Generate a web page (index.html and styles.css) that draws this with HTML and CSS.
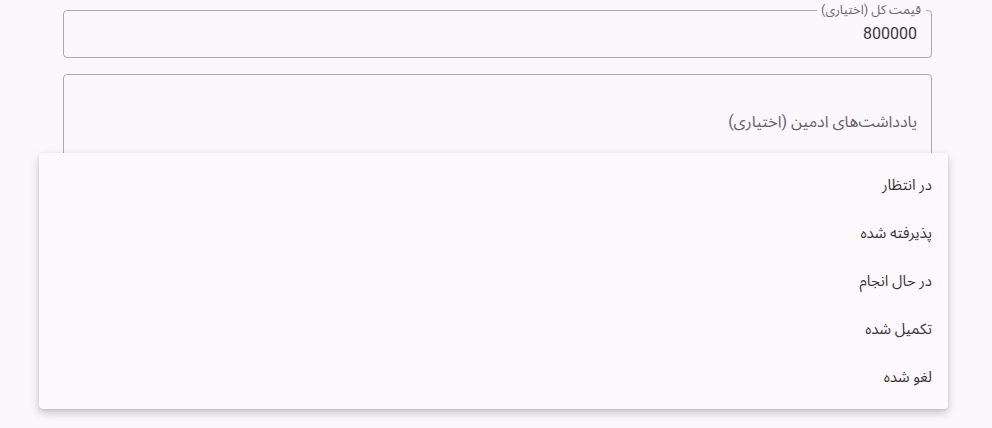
FILE: index.html
```html
<!DOCTYPE html>
<html lang="fa" dir="rtl">
<head>
    <meta charset="UTF-8">
    <meta name="viewport" content="width=device-width, initial-scale=1.0">
    <title>ویرایش سفارش</title>
    <link rel="stylesheet" href="styles.css">
</head>
<body>

    <div class="form">
        <div class="field">
            <span class="label">قیمت کل (اختیاری)</span>
            <div class="value">800000</div>
        </div>

        <div class="field notes">
            <div class="placeholder">یادداشت‌های ادمین (اختیاری)</div>
        </div>

        <div class="field status"></div>
    </div>

    <div class="menu">
        <div class="item">در انتظار</div>
        <div class="item">پذیرفته شده</div>
        <div class="item">در حال انجام</div>
        <div class="item">تکمیل شده</div>
        <div class="item">لغو شده</div>
    </div>

</body>
</html>
```

FILE: styles.css
```css
* {
    margin: 0;
    padding: 0;
    box-sizing: border-box;
}
body {
    font-family: Roboto, "Noto Sans Arabic", "DejaVu Sans", sans-serif;
    background-color: #fcf7fc;
    color: #1d1b20;
    height: 428px;
    overflow: hidden;
    position: relative;
}
.form {
    display: flex;
    flex-direction: column;
    gap: 16px;
    padding: 10px 60px 0 63px;
}
.field {
    position: relative;
    height: 48px;
    border: 1px solid #aea9b1;
    border-radius: 4px;
    display: flex;
    align-items: center;
    padding: 0 14px;
}
.label {
    position: absolute;
    top: -8px;
    right: 5px;
    padding: 0 5px 0 4px;
    background-color: #fcf7fc;
    font-size: 12.8px;
    line-height: 14px;
    color: #6a666d;
}
.value {
    font-size: 16px;
    color: #3a383d;
    margin-top: -2px;
}
.notes {
    height: 96px;
}
.placeholder {
    font-size: 16px;
    color: #666269;
}
.menu {
    position: absolute;
    top: 153px;
    left: 39px;
    width: 909px;
    padding: 8px 0;
    background-color: #fdf8fd;
    border-radius: 4px;
    box-shadow: 0 4px 10px rgba(0, 0, 0, 0.2), 0 1px 3px rgba(0, 0, 0, 0.1);
}
.item {
    height: 48px;
    display: flex;
    align-items: center;
    padding: 0 16px;
    font-size: 15px;
    color: #38363b;
}
```
